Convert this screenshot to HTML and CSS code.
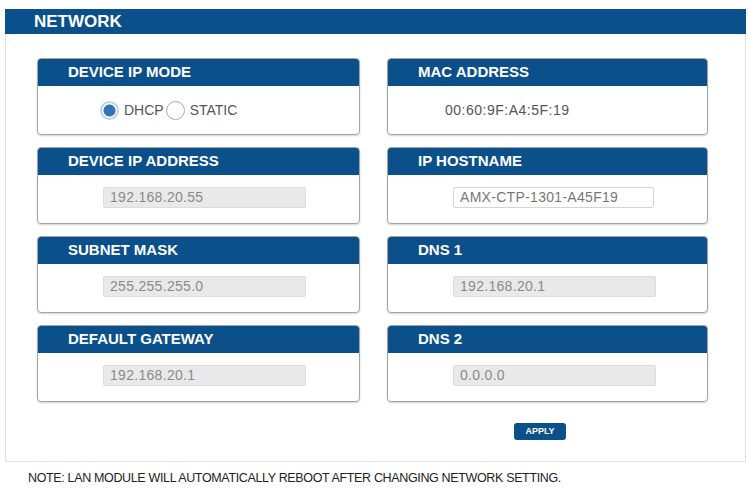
FILE: index.html
```html
<!DOCTYPE html>
<html lang="en">
<head>
    <meta charset="UTF-8">
    <meta name="viewport" content="width=device-width, initial-scale=1.0">
    <title>Network</title>
    <link rel="stylesheet" href="styles.css">
</head>
<body>
    <div class="panel">
        <div class="panel-title">NETWORK</div>

        <div class="cards">
            <div class="card">
                <div class="card-head">DEVICE IP MODE</div>
                <div class="card-body">
                    <label class="radio"><input type="radio" name="ipmode" checked> DHCP</label>
                    <label class="radio"><input type="radio" name="ipmode"> STATIC</label>
                </div>
            </div>
            <div class="card">
                <div class="card-head">MAC ADDRESS</div>
                <div class="card-body">
                    <span class="value">00:60:9F:A4:5F:19</span>
                </div>
            </div>

            <div class="card">
                <div class="card-head">DEVICE IP ADDRESS</div>
                <div class="card-body">
                    <input class="field" type="text" value="192.168.20.55" disabled>
                </div>
            </div>
            <div class="card">
                <div class="card-head">IP HOSTNAME</div>
                <div class="card-body">
                    <input class="field field-edit" type="text" value="AMX-CTP-1301-A45F19">
                </div>
            </div>

            <div class="card">
                <div class="card-head">SUBNET MASK</div>
                <div class="card-body">
                    <input class="field" type="text" value="255.255.255.0" disabled>
                </div>
            </div>
            <div class="card">
                <div class="card-head">DNS 1</div>
                <div class="card-body">
                    <input class="field" type="text" value="192.168.20.1" disabled>
                </div>
            </div>

            <div class="card">
                <div class="card-head">DEFAULT GATEWAY</div>
                <div class="card-body">
                    <input class="field" type="text" value="192.168.20.1" disabled>
                </div>
            </div>
            <div class="card">
                <div class="card-head">DNS 2</div>
                <div class="card-body">
                    <input class="field" type="text" value="0.0.0.0" disabled>
                </div>
            </div>

            <div class="actions">
                <button type="button" class="apply">APPLY</button>
            </div>
        </div>
    </div>

    <p class="note">NOTE: LAN MODULE WILL AUTOMATICALLY REBOOT AFTER CHANGING NETWORK SETTING.</p>
</body>
</html>
```

FILE: styles.css
```css
:root {
    --blue: #0b4f8b;
    --card-border: #a3a3a3;
}

* {
    box-sizing: border-box;
    margin: 0;
    padding: 0;
}

body {
    font-family: 'Liberation Sans', Arial, sans-serif;
    background: #fff;
    color: #333;
}

.panel {
    margin: 9px 2px 0 5px;
    height: 453px;
    border: 1px solid #e2e2e2;
    border-top: none;
}

.panel-title {
    height: 25px;
    margin: 0 -1px;
    padding-left: 29px;
    background: var(--blue);
    color: #fff;
    font-size: 17px;
    font-weight: 700;
    line-height: 25px;
}

.cards {
    display: grid;
    grid-template-columns: 323px 321px;
    column-gap: 27px;
    row-gap: 12px;
    padding: 24px 0 0 31px;
}

.card {
    height: 77px;
    border: 1px solid var(--card-border);
    border-radius: 4px;
    overflow: hidden;
    box-shadow: 0 1px 2px rgba(0, 0, 0, 0.18);
}

.card-head {
    height: 27px;
    padding-left: 30px;
    background: var(--blue);
    color: #fff;
    font-size: 15px;
    font-weight: 700;
    line-height: 26px;
}

.card-body {
    display: flex;
    align-items: center;
    height: 48px;
    padding-left: 62px;
}

.radio {
    display: flex;
    align-items: center;
    gap: 5px;
    font-size: 14px;
    color: #555;
}

.radio + .radio {
    margin-left: 2px;
}

.radio input {
    appearance: none;
    width: 19px;
    height: 19px;
    border: 1px solid #a9a9a9;
    border-radius: 50%;
    background: #fff;
}

.radio input:checked {
    border: 2px solid #c3d0de;
    background: radial-gradient(circle, #3572b8 0 5.5px, #fff 6.5px);
}

.value {
    margin-left: -5px;
    font-size: 14px;
    letter-spacing: 0.5px;
    color: #555;
}

.field {
    width: 203px;
    height: 21px;
    margin: -4px 0 0 3px;
    padding: 0 6px;
    border: 1px solid #dcdcdc;
    border-radius: 2px;
    background: #e9e9e9;
    color: #8a8a8a;
    font-family: inherit;
    font-size: 14px;
    letter-spacing: 0.3px;
}

.field-edit {
    width: 201px;
    background: #fff;
    border-color: #d4d4d4;
    color: #777;
}

.actions {
    grid-column: 2;
    padding: 6px 0 0 127px;
}

.apply {
    width: 52px;
    height: 17px;
    border: none;
    border-radius: 3px;
    background: var(--blue);
    color: #fff;
    font-family: inherit;
    font-size: 9px;
    font-weight: 700;
    cursor: pointer;
}

.note {
    margin: 9px 0 0 28px;
    font-size: 12.5px;
    letter-spacing: -0.35px;
    color: #222;
}
```
